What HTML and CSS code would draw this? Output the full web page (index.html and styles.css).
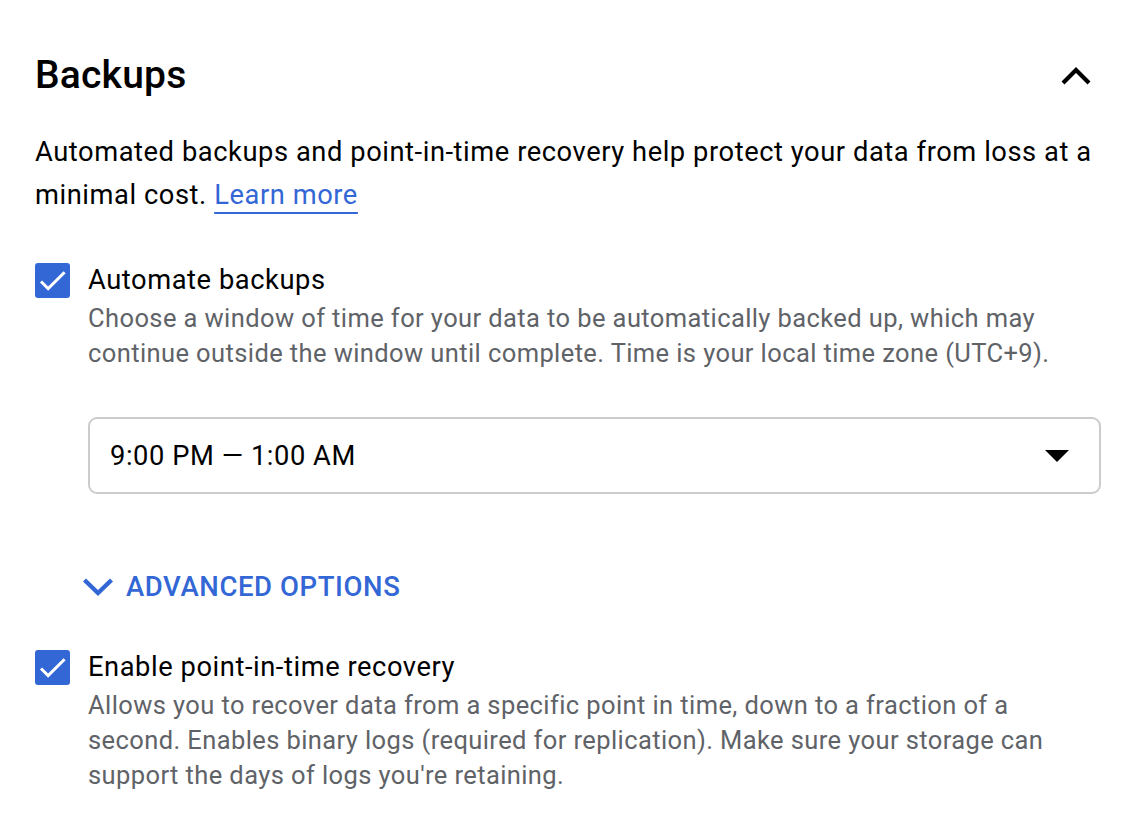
FILE: index.html
```html
<!DOCTYPE html>
<html lang="en">
<head>
<meta charset="utf-8">
<title>Backups</title>
<link rel="stylesheet" href="styles.css">
</head>
<body>
<section class="panel">
  <div class="header">
    <h2 class="title">Backups</h2>
    <svg class="collapse" width="30" height="20" viewBox="0 0 30 20"><polyline points="2,17 15,4 28,17" fill="none" stroke="#000" stroke-width="4.2"/></svg>
  </div>
  <p class="intro">Automated backups and point-in-time recovery help protect your data from loss at a minimal cost. <a class="link" href="#">Learn more</a></p>

  <div class="option">
    <span class="checkbox"><svg width="35" height="35" viewBox="0 0 24 24"><path d="M9 16.17L4.83 12l-1.42 1.41L9 19 21 7l-1.41-1.41z" fill="#fff"/></svg></span>
    <div class="option-body">
      <div class="option-label">Automate backups</div>
      <div class="option-desc">Choose a window of time for your data to be automatically backed up, which may continue outside the window until complete. Time is your local time zone (UTC+9).</div>
      <div class="select">
        <span class="select-value">9:00 PM — 1:00 AM</span>
        <svg class="arrow" width="24" height="12" viewBox="0 0 24 12"><polygon points="0,0 24,0 12,12" fill="#000"/></svg>
      </div>
    </div>
  </div>

  <div class="advanced">
    <svg width="32" height="20" viewBox="0 0 32 20"><polyline points="2.5,3 16,16 29.5,3" fill="none" stroke="#3367d6" stroke-width="4.4"/></svg>
    <span class="advanced-label">ADVANCED OPTIONS</span>
  </div>

  <div class="option option-second">
    <span class="checkbox"><svg width="35" height="35" viewBox="0 0 24 24"><path d="M9 16.17L4.83 12l-1.42 1.41L9 19 21 7l-1.41-1.41z" fill="#fff"/></svg></span>
    <div class="option-body">
      <div class="option-label">Enable point-in-time recovery</div>
      <div class="option-desc">Allows you to recover data from a specific point in time, down to a fraction of a second. Enables binary logs (required for replication). Make sure your storage can support the days of logs you're retaining.</div>
    </div>
  </div>
</section>
</body>
</html>
```

FILE: styles.css
```css
html, body {
  margin: 0;
  padding: 0;
  background: #fff;
}

body {
  font-family: Roboto, "Noto Sans", Arial, sans-serif;
  color: #000;
}

.panel {
  width: 1066px;
  padding: 50px 0 0 35px;
}

.header {
  display: flex;
  align-items: center;
  justify-content: space-between;
  height: 50px;
}

.title {
  margin: 0;
  font-size: 39px;
  font-weight: 500;
  letter-spacing: 0.2px;
  line-height: 50px;
}

.collapse {
  margin: 2px 10px 0 0;
}

.intro {
  margin: 31px 0 0;
  font-size: 27.3px;
  letter-spacing: 0.56px;
  line-height: 43px;
}

.link {
  color: #3367d6;
  text-decoration: underline;
  text-decoration-thickness: 2px;
  text-underline-offset: 8px;
}

.option {
  display: flex;
  gap: 18px;
  margin-top: 42px;
}

.option-second {
  margin-top: 41px;
}

.checkbox {
  flex: none;
  width: 35px;
  height: 35px;
  margin-top: 4px;
  border-radius: 3px;
  background: #3367d6;
  display: flex;
}

.option-body {
  flex: 1;
}

.option-label {
  font-size: 27.3px;
  letter-spacing: 0.56px;
  line-height: 42px;
}

.option-desc {
  font-size: 25.5px;
  letter-spacing: 0.4px;
  line-height: 35px;
  color: #5f6368;
}

.select {
  margin-top: 46px;
  height: 77px;
  box-sizing: border-box;
  border: 2px solid #ccc;
  border-radius: 9px;
  display: flex;
  align-items: center;
  justify-content: space-between;
  padding: 0 30px 0 20px;
}

.select-value {
  font-size: 27.3px;
  letter-spacing: 0.56px;
}

.advanced {
  display: flex;
  align-items: center;
  gap: 12px;
  margin: 75px 0 0 47px;
  height: 36px;
}

.advanced-label {
  color: #3367d6;
  font-size: 27.5px;
  font-weight: 500;
  letter-spacing: 0.6px;
  line-height: 36px;
}
```
